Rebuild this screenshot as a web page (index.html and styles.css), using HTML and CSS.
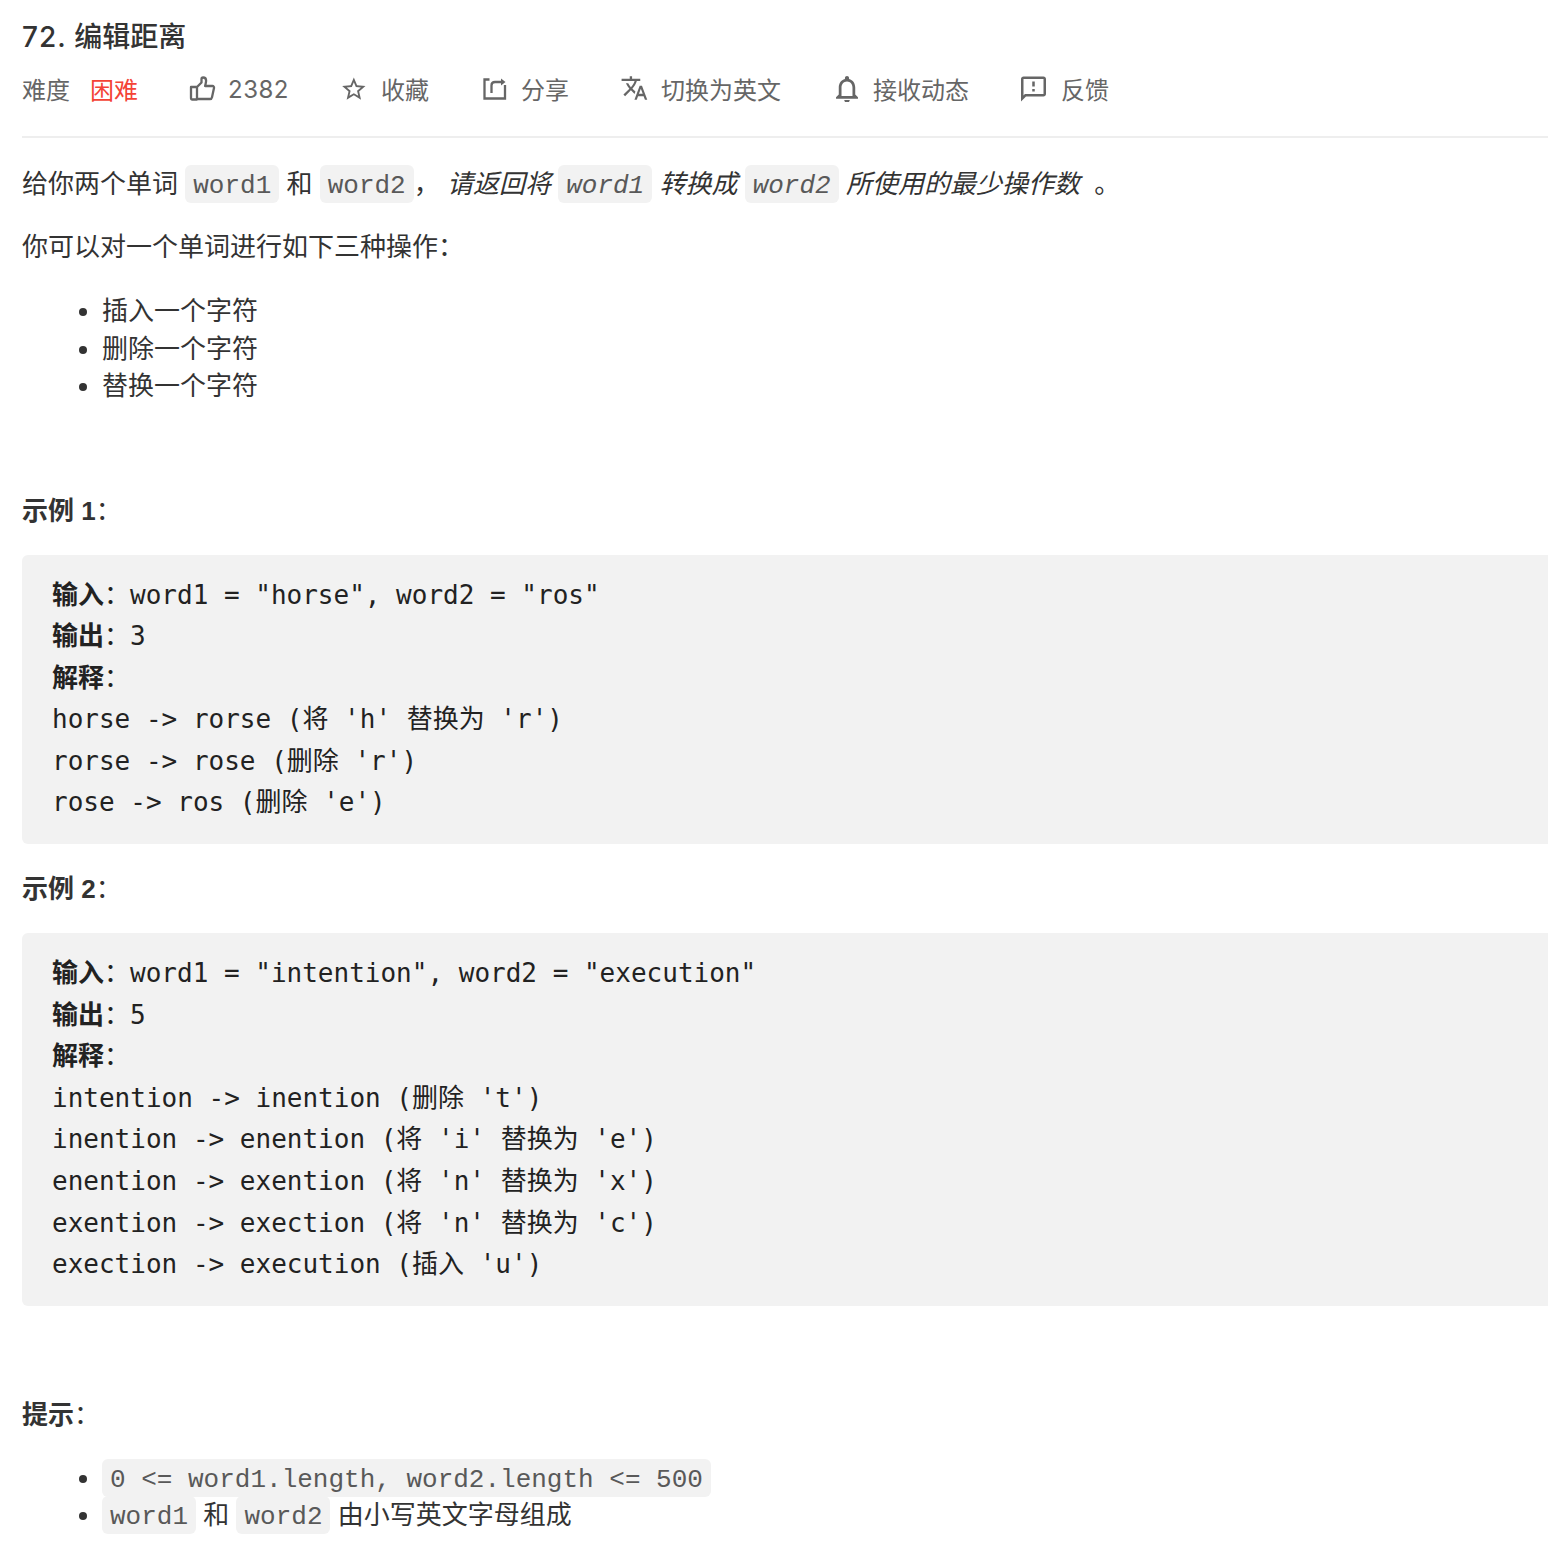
FILE: index.html
```html
<!DOCTYPE html>
<html lang="zh-CN">
<head>
  <meta charset="UTF-8" />
  <title>72. 编辑距离</title>
  <link rel="stylesheet" href="styles.css">
</head>
<body>
  <div class="question">
    <h4 class="titulo"><span class="numero">72.</span> 编辑距离</h4>
    <div class="meta">
      <div class="meta-item nivel">难度<span class="dificil">困难</span></div>
      <div class="meta-item">
        <svg class="icone" viewBox="-2 -2 28 28"><path d="M1 11h6v12.500H2a1 1 0 0 1-1-1zM7 11l4.500-4.500V3.200c0-1 .7-1.700 1.600-1.700 1.800 0 3 1.500 3 3.300 0 1.500-.5 3-1 5.200H22.500c1 0 1.700 1 1.500 2l-2 9.200c-.2 1-1 1.800-2 1.800H7" fill="none" stroke="#666" stroke-width="2.300" stroke-linejoin="round"/></svg>
        <span class="contagem">2382</span>
      </div>
      <div class="meta-item">
        <svg class="icone" viewBox="1 -1 24 24"><path d="M22 9.240l-7.190-.62L12 2 9.190 8.630 2 9.240l5.460 4.730L5.820 21 12 17.270 18.180 21l-1.630-7.030L22 9.240zM12 15.400l-3.760 2.270 1-4.280-3.320-2.880 4.380-.38L12 6.100l1.710 4.040 4.380.38-3.320 2.880 1 4.280L12 15.400z"/></svg>
        收藏
      </div>
      <div class="meta-item">
        <svg class="icone" viewBox="0 -1 28 28"><path d="M8.500 4.500H3.500v19h20.500V10M10.500 18v-7.500c0-2.200 1.300-3.500 3.500-3.500h6.500" fill="none" stroke="#666" stroke-width="2.300"/><path d="M20 3.500l4.500 3.500-4.500 3.500z"/></svg>
        分享
      </div>
      <div class="meta-item">
        <svg class="icone" viewBox="0.500 0 24 24"><path d="M12.870 15.070l-2.540-2.510.03-.03c1.740-1.940 2.980-4.170 3.710-6.530H17V4h-7V2H8v2H1v1.990h11.170C11.500 7.920 10.440 9.750 9 11.350 8.070 10.320 7.300 9.190 6.690 8h-2c.73 1.630 1.730 3.170 2.980 4.560l-5.090 5.020L4 19l5-5 3.110 3.110.76-2.040zM18.500 10h-2L12 22h2l1.120-3h4.750L21 22h2l-4.500-12zm-2.620 7l1.620-4.330L19.120 17h-3.240z"/></svg>
        切换为英文
      </div>
      <div class="meta-item">
        <svg class="icone" viewBox="1.800 1 20.400 20.400"><path d="M12 22c1.100 0 2-.9 2-2h-4c0 1.100.89 2 2 2zm6-6v-5c0-3.070-1.640-5.640-4.500-6.320V4c0-.83-.67-1.500-1.500-1.500s-1.500.67-1.500 1.500v.68C7.630 5.360 6 7.920 6 11v5l-2 2v1h16v-1l-2-2zm-2 1H8v-6c0-2.480 1.510-4.500 4-4.500s4 2.020 4 4.500v6z"/></svg>
        接收动态
      </div>
      <div class="meta-item">
        <svg class="icone" viewBox="2 0 22.400 22.400"><path d="M20 2H4c-1.100 0-1.990.9-1.990 2L2 22l4-4h14c1.100 0 2-.9 2-2V4c0-1.100-.9-2-2-2zm0 14H5.170L4 17.170V4h16v12zM11 12h2v2h-2zm0-6h2v4h-2z"/></svg>
        反馈
      </div>
    </div>

    <div class="conteudo">
      <p>给你两个单词 <code>word1</code> 和 <code>word2</code>， <em>请返回将 <code>word1</code> 转换成 <code>word2</code> 所使用的最少操作数</em> &nbsp;。</p>
      <p>你可以对一个单词进行如下三种操作：</p>
      <ul>
        <li>插入一个字符</li>
        <li>删除一个字符</li>
        <li>替换一个字符</li>
      </ul>
      <p class="vazio">&nbsp;</p>
      <p class="rotulo"><strong>示例 1</strong>：</p>
      <pre><strong>输入</strong>：word1 = "horse", word2 = "ros"
<strong>输出</strong>：3
<strong>解释</strong>：
horse -&gt; rorse (将 'h' 替换为 'r')
rorse -&gt; rose (删除 'r')
rose -&gt; ros (删除 'e')
</pre>
      <p class="rotulo"><strong>示例 2</strong>：</p>
      <pre><strong>输入</strong>：word1 = "intention", word2 = "execution"
<strong>输出</strong>：5
<strong>解释</strong>：
intention -&gt; inention (删除 't')
inention -&gt; enention (将 'i' 替换为 'e')
enention -&gt; exention (将 'n' 替换为 'x')
exention -&gt; exection (将 'n' 替换为 'c')
exection -&gt; execution (插入 'u')
</pre>
      <p class="folga">&nbsp;</p>
      <p class="rotulo"><strong>提示</strong>：</p>
      <ul>
        <li><code>0 &lt;= word1.length, word2.length &lt;= 500</code></li>
        <li><code>word1</code> 和 <code>word2</code> 由小写英文字母组成</li>
      </ul>
    </div>
  </div>
</body>
</html>
```

FILE: styles.css
```css
body {
  margin: 0;
  padding: 0;
  background-color: #fff;
  color: #333;
  font-family: "Liberation Sans", "Noto Sans CJK SC", sans-serif;
  overflow-x: hidden;
}

.question {
  padding: 18px 0 0 22px;
}

.titulo {
  margin: 0;
  font-family: Inter, "Noto Sans CJK SC", sans-serif;
  font-size: 28px;
  line-height: 38px;
  font-weight: 500;
  color: #333;
}

.numero {
  letter-spacing: 1px;
}

.meta {
  display: flex;
  align-items: center;
  height: 64px;
  padding-bottom: 16px;
  border-bottom: 2px solid #eee;
  font-family: Inter, "Noto Sans CJK SC", sans-serif;
  font-size: 24px;
  color: #666;
}

.meta-item {
  display: flex;
  align-items: center;
  gap: 12px;
  margin-right: 52px;
}

.nivel {
  gap: 20px;
  margin-right: 50px;
}

.contagem {
  margin-top: 3px;
  letter-spacing: .5px;
}

.dificil {
  color: #f44336;
}

.icone {
  width: 28px;
  height: 28px;
  fill: #666;
}

.conteudo {
  margin-top: 28px;
  font-size: 26px;
  line-height: 37.5px;
}

.conteudo p {
  margin: 26px 0;
  line-height: 37px;
}

.conteudo p.vazio {
  line-height: 35px;
}

.conteudo p.rotulo {
  line-height: 36px;
}

.conteudo p.folga {
  margin-top: 28px;
}

.conteudo ul {
  margin: 27px 0 26px;
  padding-left: 80px;
}

code {
  font-family: "Liberation Mono", "Noto Sans CJK SC", monospace;
  font-size: 26px;
  line-height: 1;
  color: #595959;
  background-color: #f2f2f2;
  padding: 6px 8px 2px;
  border-radius: 6px;
}

pre {
  margin: 26px -10px 27px 0;
  padding: 20px 30px;
  background-color: #f2f2f2;
  border-radius: 6px;
  font-family: "DejaVu Sans Mono", "Noto Sans CJK SC", monospace;
  font-size: 26px;
  line-height: 41.6px;
  color: #222;
}
```
